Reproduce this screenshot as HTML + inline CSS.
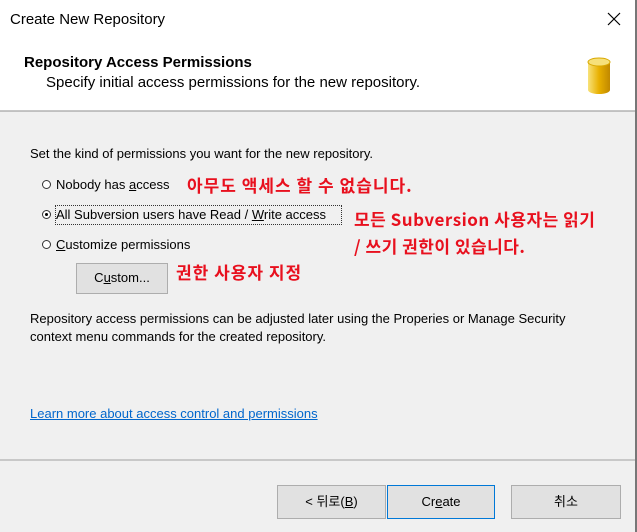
<!DOCTYPE html>
<html><head><meta charset="utf-8"><style>
body{margin:0;width:637px;height:532px;overflow:hidden;background:#f0f0f0;font-family:"Liberation Sans","Noto Sans CJK KR",sans-serif;font-size:13px;color:#000;position:relative}
.a{position:absolute;white-space:nowrap}
.k{color:#e8101e;font-family:"Noto Sans CJK KR",sans-serif;font-weight:bold;font-size:17px;letter-spacing:1px}
.btn{position:absolute;background:#e1e1e1;border:1px solid #adadad;box-sizing:border-box;text-align:center;font-size:13px;line-height:31px;height:34px;top:485px}
.r{position:absolute;width:9px;height:9px;border:1px solid #333;border-radius:50%;background:#fff;box-sizing:border-box}
</style></head><body>
<div class="a" style="left:0;top:0;width:637px;height:111px;background:#fff"></div>
<div class="a" style="left:0;top:110px;width:637px;height:2px;background:#a0a0a0;opacity:.6"></div>
<div class="a" style="left:635px;top:0;width:2px;height:532px;background:#777"></div>
<div class="a" style="left:10px;top:11px;font-size:15px">Create New Repository</div>
<svg class="a" style="left:607px;top:12px" width="14" height="14"><path d="M1 1L13 13M13 1L1 13" stroke="#000" stroke-width="1.2"/></svg>
<div class="a" style="left:24px;top:54px;font-size:15px;font-weight:bold">Repository Access Permissions</div>
<div class="a" style="left:46px;top:74px;font-size:15px">Specify initial access permissions for the new repository.</div>
<svg class="a" style="left:585px;top:56px" width="30" height="40"><defs><linearGradient id="g" x1="0" x2="1"><stop offset="0" stop-color="#f8e27a"/><stop offset=".5" stop-color="#e8b000"/><stop offset="1" stop-color="#c08800"/></linearGradient></defs><path d="M3 6v28a11 4 0 0 0 22 0V6z" fill="url(#g)"/><ellipse cx="14" cy="6" rx="11" ry="4" fill="#f6e07a" stroke="#d9a800"/></svg>
<div class="a" style="left:30px;top:146px">Set the kind of permissions you want for the new repository.</div>
<div class="r" style="left:42px;top:180px"></div><div class="a" style="left:56px;top:177px">Nobody has <u>a</u>ccess</div>
<div class="a k" style="left:187px;top:172px">아무도 액세스 할 수 없습니다.</div>
<div class="r" style="left:42px;top:210px"></div><div class="a" style="left:45px;top:213px;width:3px;height:3px;border-radius:50%;background:#000"></div>
<div class="a" style="left:55px;top:205px;width:285px;height:18px;border:1px dotted #333"></div>
<div class="a" style="left:56px;top:207px">All Subversion users have Read / <u>W</u>rite access</div>
<div class="a k" style="left:354px;top:206px;letter-spacing:.5px">모든 Subversion 사용자는 읽기</div>
<div class="a k" style="left:354px;top:233px;letter-spacing:.5px">/ 쓰기 권한이 있습니다.</div>
<div class="r" style="left:42px;top:240px"></div><div class="a" style="left:56px;top:237px"><u>C</u>ustomize permissions</div>
<div class="btn" style="left:76px;top:263px;width:92px;height:31px;line-height:28px;font-size:13px">C<u>u</u>stom...</div>
<div class="a k" style="left:176px;top:259px">권한 사용자 지정</div>
<div class="a" style="left:30px;top:310px;line-height:18px">Repository access permissions can be adjusted later using the Properies or Manage Security<br>context menu commands for the created repository.</div>
<div class="a" style="left:30px;top:406px;color:#0066cc;text-decoration:underline">Learn more about access control and permissions</div>
<div class="a" style="left:0;top:459px;width:635px;height:2px;background:#c8c8c8"></div>
<div class="btn" style="left:277px;width:109px">&lt; 뒤로(<u>B</u>)</div>
<div class="btn" style="left:387px;width:108px;border-color:#0078d7">Cr<u>e</u>ate</div>
<div class="btn" style="left:511px;width:110px">취소</div>
</body></html>
